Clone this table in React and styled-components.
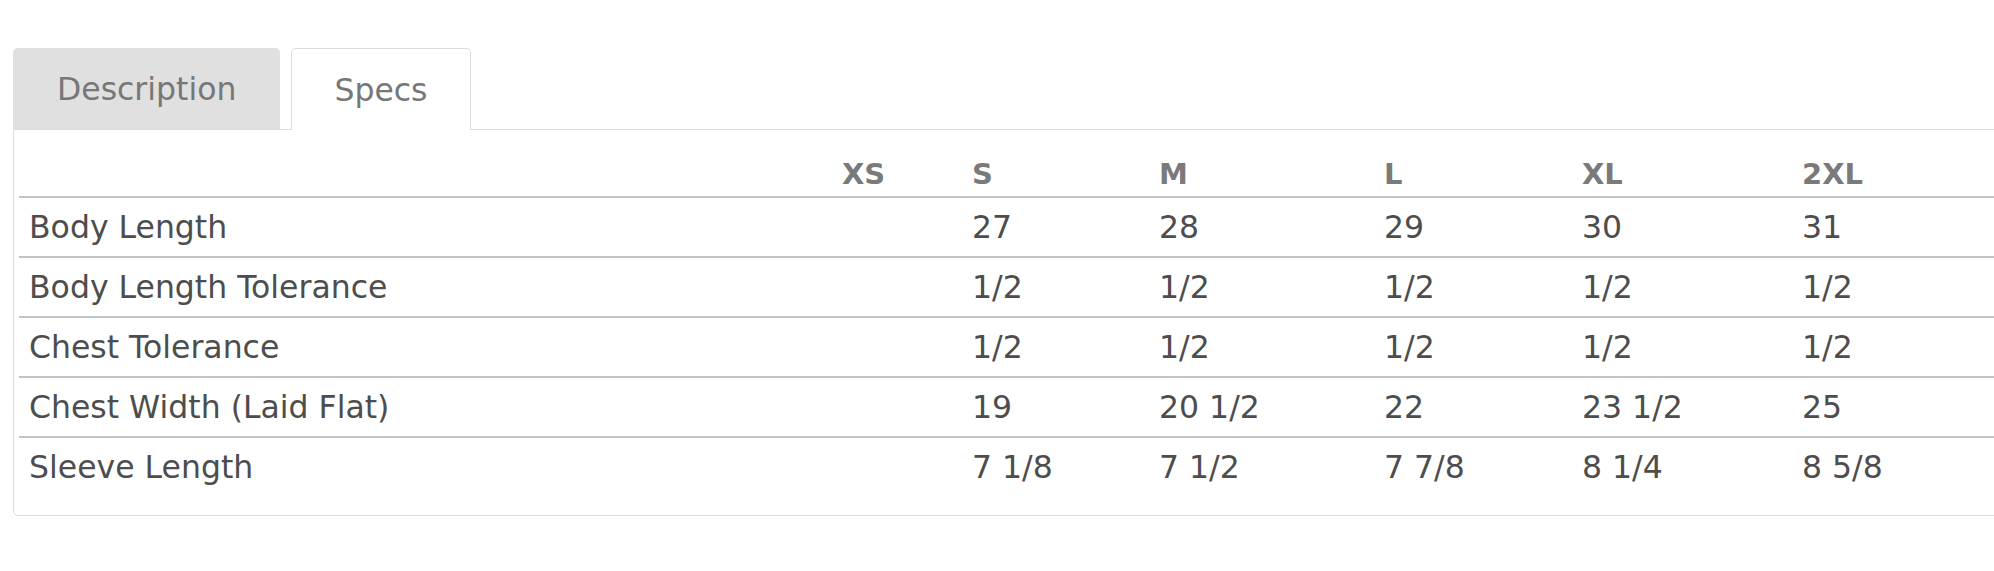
import React from 'react';
import styled, { createGlobalStyle } from 'styled-components';

const GlobalStyle = createGlobalStyle`
    html, body {
        margin: 0;
        overflow: hidden;
        background: #fff;
    }
    body {
        font-family: "DejaVu Sans", "Open Sans", sans-serif;
    }
`

const Page = styled.div`
    padding: 48px 0 0 13px;
    width: 2200px;
`

const TabList = styled.div`
    display: flex;
    align-items: flex-start;
    gap: 11px;
    height: 81px;
`

const Tab = styled.button`
    position: relative;
    z-index: 1;
    box-sizing: border-box;
    height: ${p => (p.$active ? '82px' : '81px')};
    padding: 0 ${p => p.$pad}px;
    font-family: inherit;
    font-size: 31.5px;
    color: #777;
    background: ${p => (p.$active ? '#fff' : '#e0e0e0')};
    border: 1px solid ${p => (p.$active ? '#dcdcdc' : '#e0e0e0')};
    border-bottom: none;
    border-radius: 5px 5px 0 0;
    cursor: pointer;
`

const Panel = styled.div`
    width: 2150px;
    border: 1px solid #dcdcdc;
    border-radius: 0 0 5px 5px;
    padding: 0 5px 19px;
    background: #fff;
`

const Table = styled.table`
    border-collapse: separate;
    border-spacing: 0;
    table-layout: fixed;
    width: 2100px;
`

const Col = styled.col`
    width: ${p => p.$width}px;
`

const HeadCell = styled.th`
    text-align: left;
    font-weight: 700;
    font-size: 29px;
    color: #7a7a7a;
    line-height: 40px;
    padding: 24px 10px 2px;
    border-bottom: 2px solid #c4c4c4;
`

const Cell = styled.td`
    font-size: 31.5px;
    color: #4d4d4d;
    line-height: 58px;
    height: 58px;
    padding: 0 10px;
    white-space: nowrap;
    border-bottom: ${p => (p.$last ? 'none' : '2px solid #c4c4c4')};
`

const sizes = ['XS', 'S', 'M', 'L', 'XL', '2XL']
const widths = [813, 130, 187, 225, 198, 220, 327]

const specs = [
    { name: 'Body Length', values: ['27', '28', '29', '30', '31'] },
    { name: 'Body Length Tolerance', values: ['1/2', '1/2', '1/2', '1/2', '1/2'] },
    { name: 'Chest Tolerance', values: ['1/2', '1/2', '1/2', '1/2', '1/2'] },
    { name: 'Chest Width (Laid Flat)', values: ['19', '20 1/2', '22', '23 1/2', '25'] },
    { name: 'Sleeve Length', values: ['7 1/8', '7 1/2', '7 7/8', '8 1/4', '8 5/8'] },
]

export default function App() {
    return (
        <Page>
            <GlobalStyle />
            <TabList>
                <Tab $pad={43}>Description</Tab>
                <Tab $pad={42} $active>Specs</Tab>
            </TabList>
            <Panel>
                <Table>
                    <colgroup>
                        {widths.map((w, i) => <Col key={i} $width={w} />)}
                    </colgroup>
                    <thead>
                        <tr>
                            <HeadCell />
                            {sizes.map(s => <HeadCell key={s}>{s}</HeadCell>)}
                        </tr>
                    </thead>
                    <tbody>
                        {specs.map((row, r) => {
                            const last = r === specs.length - 1
                            return (
                                <tr key={row.name}>
                                    <Cell $last={last}>{row.name}</Cell>
                                    {/* XS has no measurements */}
                                    <Cell $last={last} />
                                    {row.values.map((v, i) => <Cell key={i} $last={last}>{v}</Cell>)}
                                </tr>
                            )
                        })}
                    </tbody>
                </Table>
            </Panel>
        </Page>
    )
}
